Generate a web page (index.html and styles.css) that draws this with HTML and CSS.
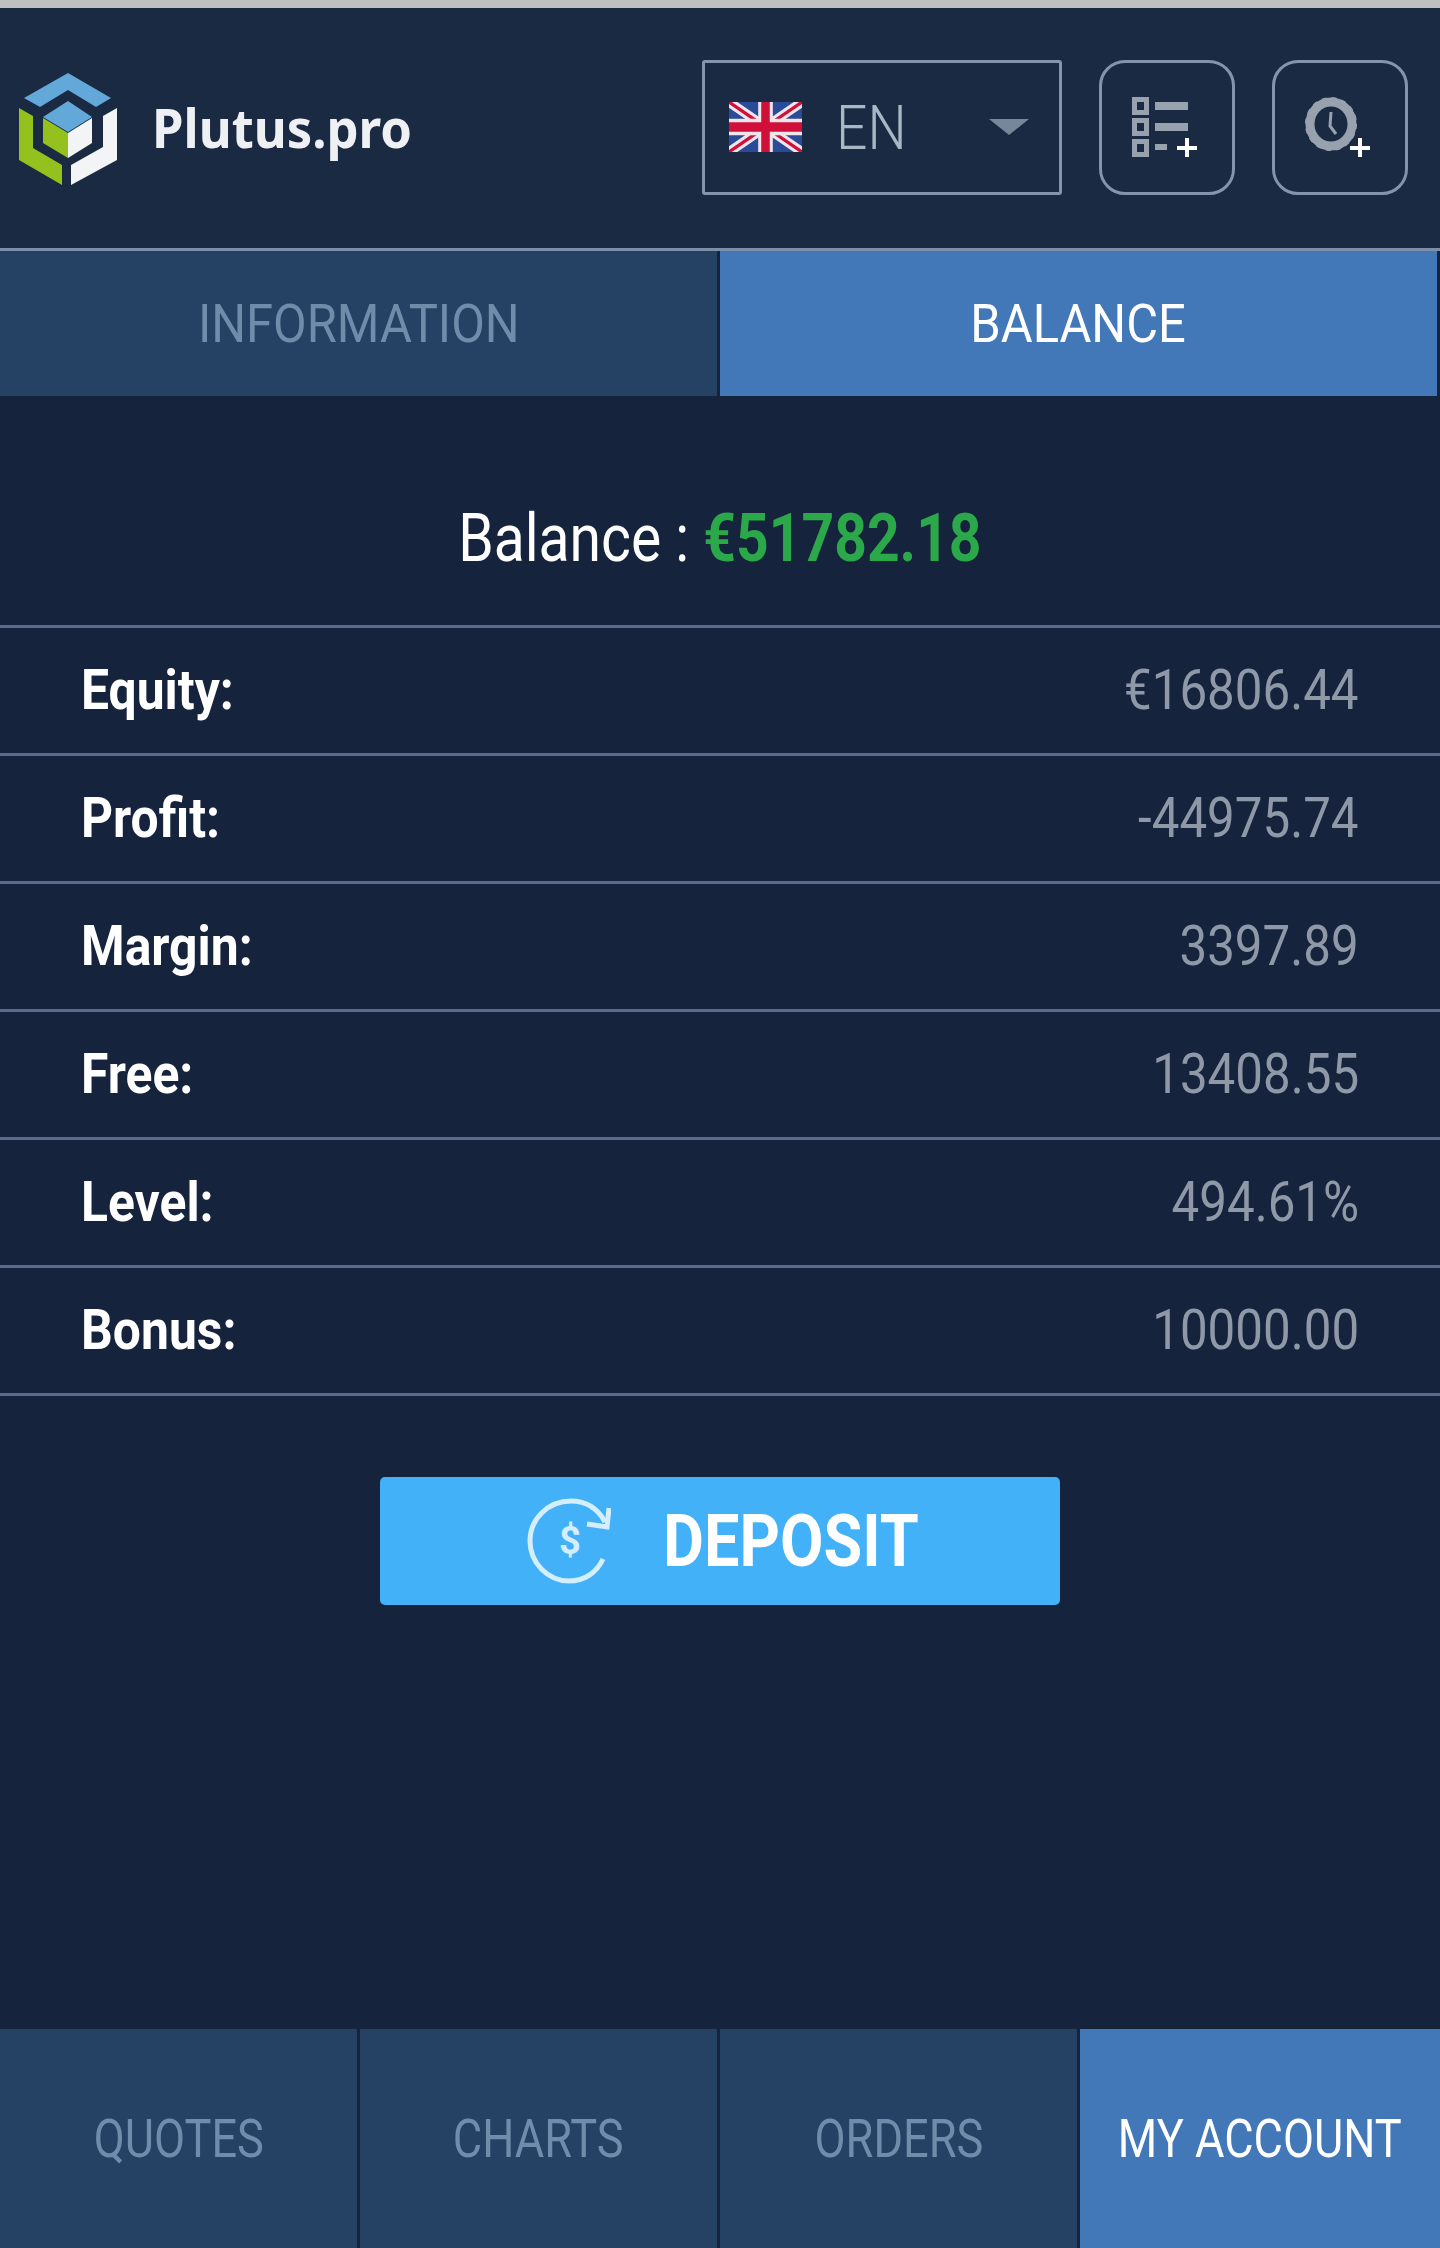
FILE: index.html
```html
<!DOCTYPE html>
<html lang="en">
<head>
  <meta charset="UTF-8">
  <meta name="viewport" content="width=device-width, initial-scale=1.0">
  <title>Plutus.pro</title>
  <link rel="stylesheet" href="styles.css">
</head>
<body>
  <div class="top-strip"></div>

  <header class="header">
    <div class="logo">
      <svg class="logo-icon" viewBox="0 0 98 112">
        <polygon points="49,0 92,25 77,34 49,17 21,34 5,25" fill="#62a8d8"/>
        <polygon points="49,28 73,44 49,59 24,44" fill="#62a8d8"/>
        <polygon points="24,45 49,60 49,85 24,70" fill="#95c11f"/>
        <polygon points="73,45 73,70 49,85 49,60" fill="#f2f4f6"/>
        <polygon points="0,35 14,43 14,75 43,92 43,112 0,87" fill="#95c11f"/>
        <polygon points="98,35 98,87 52,112 52,92 84,74 84,43" fill="#f2f4f6"/>
      </svg>
      <span class="logo-text">Plutus.pro</span>
    </div>
    <div class="header-tools">
      <div class="lang-select">
        <svg class="flag" viewBox="0 0 60 36" preserveAspectRatio="none">
          <rect width="60" height="36" fill="#2a4a9a"/>
          <path d="M0 0L60 36M60 0L0 36" stroke="#f0e6ea" stroke-width="7"/>
          <path d="M0 0L60 36M60 0L0 36" stroke="#d0103a" stroke-width="2.4"/>
          <path d="M30 0V36M0 18H60" stroke="#f0e6ea" stroke-width="12"/>
          <path d="M30 0V36M0 18H60" stroke="#d0103a" stroke-width="7"/>
        </svg>
        <span class="lang-code">EN</span>
        <span class="caret"></span>
      </div>
      <button class="icon-button">
        <svg class="tool-icon" viewBox="0 0 66 60" width="66" height="60">
          <g fill="none" stroke="#98a2ae" stroke-width="5">
            <rect x="2.5" y="2.5" width="12" height="13"/>
            <rect x="2.5" y="23.5" width="12" height="13"/>
            <rect x="2.5" y="44.5" width="12" height="13"/>
          </g>
          <g fill="#98a2ae">
            <rect x="23" y="5" width="33" height="8"/>
            <rect x="23" y="26" width="33" height="8"/>
            <rect x="23" y="47" width="12" height="6"/>
          </g>
          <path d="M55 41V61M45 51H65" stroke="#fff" stroke-width="4"/>
        </svg>
      </button>
      <button class="icon-button">
        <svg class="tool-icon" viewBox="0 0 66 60" width="66" height="60">
          <ellipse cx="26" cy="27" rx="21" ry="22" fill="none" stroke="#98a2ae" stroke-width="9"/>
          <ellipse cx="26" cy="27" rx="25" ry="26" fill="none" stroke="#98a2ae" stroke-width="2" stroke-dasharray="5 5"/>
          <path d="M26 15L25 29L31 37" fill="none" stroke="#98a2ae" stroke-width="3"/>
          <path d="M55 41V61M45 51H65" stroke="#fff" stroke-width="4"/>
        </svg>
      </button>
    </div>
  </header>

  <nav class="tabs top-tabs">
    <div class="tab"><span class="cond">INFORMATION</span></div>
    <div class="tab active"><span class="cond">BALANCE</span></div>
  </nav>

  <div class="balance-line">
    <span class="cond">Balance : <b class="balance-value">€51782.18</b></span>
  </div>

  <div class="rows">
    <div class="row"><span class="row-label">Equity:</span><span class="row-value">€16806.44</span></div>
    <div class="row"><span class="row-label">Profit:</span><span class="row-value">-44975.74</span></div>
    <div class="row"><span class="row-label">Margin:</span><span class="row-value">3397.89</span></div>
    <div class="row"><span class="row-label">Free:</span><span class="row-value">13408.55</span></div>
    <div class="row"><span class="row-label">Level:</span><span class="row-value">494.61%</span></div>
    <div class="row"><span class="row-label">Bonus:</span><span class="row-value">10000.00</span></div>
  </div>

  <div class="deposit-wrap">
    <button class="deposit-button">
      <svg class="deposit-icon" viewBox="0 0 84 86" width="84" height="86">
        <path d="M78 24C70 9 58 3 44 3C21 3 3 21 3 43C3 65 21 83 42 83C58 83 70 74 76 61" fill="none" stroke="#d4eefd" stroke-width="5"/>
        <path d="M60 26L80 29L82 10" fill="none" stroke="#d4eefd" stroke-width="5"/>
        <text x="43" y="56" class="deposit-dollar">$</text>
      </svg>
      <span class="deposit-text">DEPOSIT</span>
    </button>
  </div>

  <nav class="tabs bottom-tabs">
    <div class="tab"><span class="cond">QUOTES</span></div>
    <div class="tab"><span class="cond">CHARTS</span></div>
    <div class="tab"><span class="cond">ORDERS</span></div>
    <div class="tab active"><span class="cond">MY ACCOUNT</span></div>
  </nav>
</body>
</html>
```

FILE: styles.css
```css
body {
  margin: 0;
  height: 2248px;
  display: flex;
  flex-direction: column;
  background-color: #15233d;
  font-family: Roboto, sans-serif;
  color: #fff;
  overflow: hidden;
}

.cond {
  display: inline-block;
  white-space: nowrap;
}

.top-strip {
  height: 8px;
  background-color: #bfc0bf;
}

.header {
  height: 243px;
  box-sizing: border-box;
  display: flex;
  align-items: center;
  justify-content: space-between;
  padding: 0 32px 2px 19px;
  background-color: #1a2a42;
  border-bottom: 3px solid #7c8fa8;
}

.logo {
  display: flex;
  align-items: center;
  gap: 35px;
}

.logo-icon {
  width: 98px;
  height: 112px;
  margin-top: 4px;
}

.logo-text {
  font-family: "Noto Sans", sans-serif;
  font-weight: 700;
  font-size: 54px;
  color: #eef0f4;
  display: inline-block;
  transform: scaleX(0.94);
  transform-origin: left center;
}

.header-tools {
  display: flex;
  align-items: center;
  gap: 37px;
}

.lang-select {
  width: 360px;
  height: 135px;
  box-sizing: border-box;
  border: 3px solid #8295aa;
  border-radius: 3px;
  display: flex;
  align-items: center;
  padding: 0 30px 0 24px;
}

.flag {
  width: 73px;
  height: 50px;
}

.lang-code {
  margin-left: 34px;
  font-size: 62px;
  font-weight: 300;
  color: #a9b6c4;
  display: inline-block;
  transform: scaleX(0.89);
  transform-origin: left center;
}

.caret {
  margin-left: auto;
  border-left: 20px solid transparent;
  border-right: 20px solid transparent;
  border-top: 16px solid #76879a;
}

.icon-button {
  width: 136px;
  height: 135px;
  box-sizing: border-box;
  padding: 0;
  background: none;
  border: 3px solid #8295aa;
  border-radius: 26px;
  display: flex;
  align-items: center;
  justify-content: center;
}

.tool-icon {
  margin-right: 4px;
}

.tabs {
  display: grid;
  column-gap: 3px;
}

.tab {
  display: flex;
  align-items: center;
  justify-content: center;
  background-color: #254163;
  color: #6f8cab;
  font-size: 54px;
}

.tab.active {
  background-color: #4277b8;
  color: #fff;
}

.top-tabs {
  grid-template-columns: 717px 717px;
  height: 145px;
}

.top-tabs .cond {
  transform: scaleX(0.905);
}

.balance-line {
  height: 229px;
  padding-top: 55px;
  box-sizing: border-box;
  display: flex;
  align-items: center;
  justify-content: center;
  font-size: 66px;
}

.balance-line .cond {
  transform: scaleX(0.864);
}

.balance-value {
  color: #2ba84a;
}

.rows {
  border-top: 3px solid #5a698c;
}

.row {
  height: 128px;
  box-sizing: border-box;
  display: flex;
  align-items: center;
  justify-content: space-between;
  padding: 0 81px 2px;
  border-bottom: 3px solid #5a698c;
  font-size: 56px;
}

.row-label {
  font-weight: 700;
  display: inline-block;
  transform: scaleX(0.89);
  transform-origin: left center;
}

.row-value {
  color: #8f98a6;
  display: inline-block;
  transform: scaleX(0.88);
  transform-origin: right center;
}

.deposit-wrap {
  display: flex;
  justify-content: center;
  padding-top: 81px;
}

.deposit-button {
  width: 680px;
  height: 128px;
  border: none;
  border-radius: 5px;
  background-color: #42b1f7;
  display: flex;
  align-items: center;
  justify-content: center;
  gap: 52px;
  padding: 0;
  font-family: inherit;
  color: #fff;
}

.deposit-dollar {
  font-family: Roboto, sans-serif;
  font-weight: 700;
  font-size: 38px;
  fill: #d4eefd;
  text-anchor: middle;
}

.deposit-text {
  font-size: 72px;
  font-weight: 700;
  display: inline-block;
  width: 251px;
  text-align: left;
  transform: scaleX(0.875);
  transform-origin: left center;
  white-space: nowrap;
}

.bottom-tabs {
  margin-top: auto;
  height: 219px;
  grid-template-columns: 357px 357px 357px 360px;
  background-color: #15233d;
}

.bottom-tabs .cond {
  transform: scaleX(0.836);
}
```
